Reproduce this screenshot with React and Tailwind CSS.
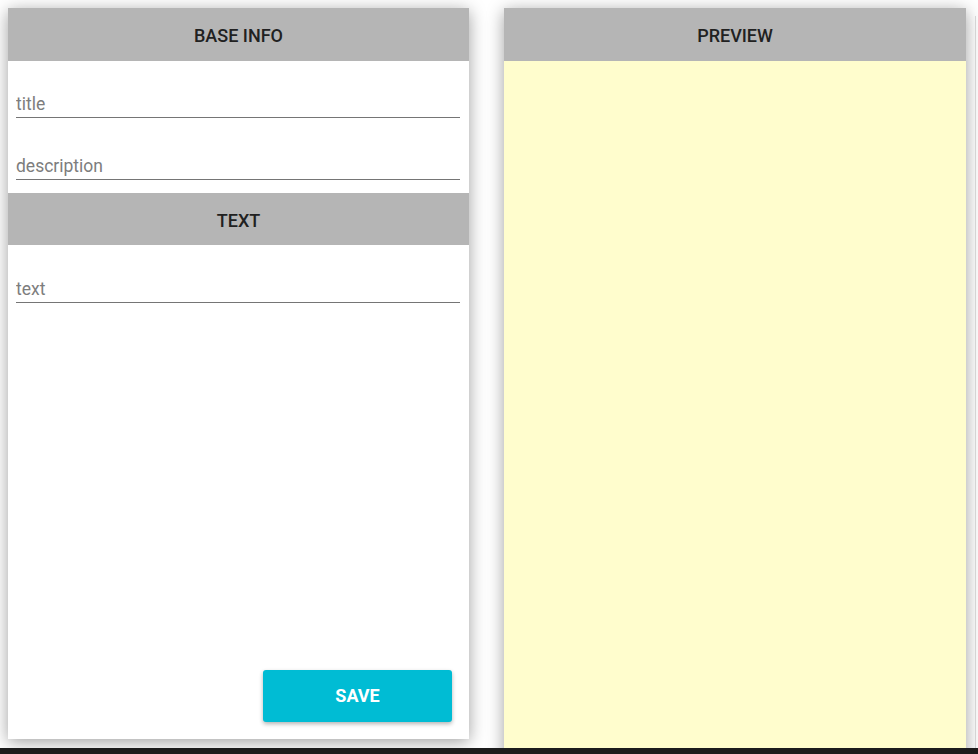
const Header = ({ children, className = '' }) => (
    <div className={`flex items-center justify-center bg-[#b5b5b5] pt-[2px] text-[18px] font-medium text-[#212121] ${className}`}>
        {children}
    </div>
);

const Field = ({ placeholder }) => (
    <input
        placeholder={placeholder}
        className="block h-[31px] w-full border-b border-[#757575] bg-transparent px-0 pt-[3px] text-[17.5px] text-[#212121] outline-none placeholder:text-[#7d7d7d]"
    />
);

export default function App() {
    return (
        <div className="flex h-[754px] w-[978px] flex-col overflow-hidden bg-white font-['Roboto',sans-serif]">
            <div className="flex h-[748px] items-start pl-2 pt-2">
                {/* Editor */}
                <div className="flex h-[731px] w-[461px] flex-col bg-white shadow-[0_3px_16px_rgba(0,0,0,0.38)]">
                    <Header className="h-[53px]">BASE INFO</Header>
                    <div className="flex flex-col gap-[31px] pl-2 pr-[9px] pb-[13px] pt-[26px]">
                        <Field placeholder="title" />
                        <Field placeholder="description" />
                    </div>
                    <Header className="h-[52px]">TEXT</Header>
                    <div className="pl-2 pr-[9px] pt-[27px]">
                        <Field placeholder="text" />
                    </div>
                    <div className="mt-auto flex justify-end pb-[17px] pr-[17px]">
                        <button className="h-[52px] w-[189px] rounded-[3px] bg-[#00bcd4] pb-[2px] text-[18px] font-bold text-white shadow-[0_2px_4px_rgba(0,0,0,0.3)]">
                            SAVE
                        </button>
                    </div>
                </div>

                {/* Preview */}
                <div className="ml-[35px] flex h-[760px] w-[462px] flex-col bg-[#fffdcd] shadow-[0_3px_16px_rgba(0,0,0,0.38)]">
                    <Header className="h-[53px]">PREVIEW</Header>
                </div>

                <div className="ml-auto mr-[2px] mt-2 h-[740px] w-px bg-[#d4d4d4]" />
            </div>
            <div className="relative z-10 h-[6px] bg-[#1c1c1c]" />
        </div>
    );
}
